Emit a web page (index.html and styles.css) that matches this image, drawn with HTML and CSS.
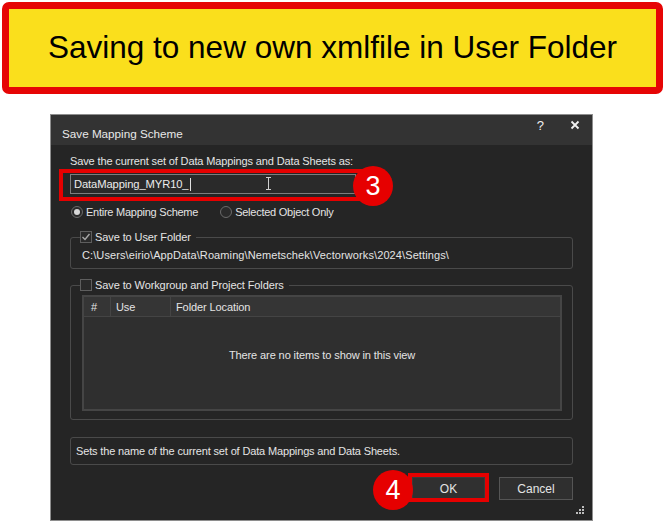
FILE: index.html
```html
<!DOCTYPE html>
<html>
<head>
<meta charset="utf-8">
<link rel="stylesheet" href="styles.css">
</head>
<body>
<div class="banner">Saving to new own xmlfile in User Folder</div>

<div class="dialog">
  <div class="titlebar">
    <span class="title">Save Mapping Scheme</span>
    <span class="tb-help">?</span>
    <svg class="tb-close" width="10" height="10" viewBox="0 0 10 10"><path d="M1.5 1.5 L8.5 8.5 M8.5 1.5 L1.5 8.5" stroke="#f0f0f0" stroke-width="1.8" fill="none"/></svg>
  </div>
  <div class="content">
    <div class="label">Save the current set of Data Mappings and Data Sheets as:</div>
    <div class="input-wrap">
      <div class="input"><span>DataMapping_MYR10_</span><span class="caret"></span>
        <svg class="ibeam" width="7" height="13" viewBox="0 0 7 13"><path d="M1 0.5 H6 M3.5 0.5 V12.5 M1 12.5 H6" stroke="#cfcfcf" stroke-width="1" fill="none"/></svg>
      </div>
      <div class="hl hl-input"></div>
      <div class="badge badge-3">3</div>
    </div>
    <div class="radios">
      <label class="radio"><span class="rb on"></span>Entire Mapping Scheme</label>
      <label class="radio"><span class="rb"></span>Selected Object Only</label>
    </div>

    <fieldset class="group g1">
      <legend><span class="cb on"><svg width="10" height="10" viewBox="0 0 10 10"><path d="M1.5 5 L4 7.5 L8.5 2" stroke="#a8a8a8" stroke-width="1.4" fill="none"/></svg></span>Save to User Folder</legend>
      <div class="path">C:\Users\eirio\AppData\Roaming\Nemetschek\Vectorworks\2024\Settings\</div>
    </fieldset>

    <fieldset class="group g2">
      <legend><span class="cb"></span>Save to Workgroup and Project Folders</legend>
      <div class="list">
        <div class="list-head">
          <div class="col c1">#</div>
          <div class="col c2">Use</div>
          <div class="col c3">Folder Location</div>
        </div>
        <div class="list-body">There are no items to show in this view</div>
      </div>
    </fieldset>

    <div class="desc">Sets the name of the current set of Data Mappings and Data Sheets.</div>

    <div class="buttons">
      <div class="btn-wrap">
        <div class="btn">OK</div>
        <div class="hl hl-ok"></div>
        <div class="badge badge-4">4</div>
      </div>
      <div class="btn">Cancel</div>
    </div>
  </div>
  <svg class="grip" width="9" height="9" viewBox="0 0 9 9">
    <rect x="7" y="1" width="2" height="2" fill="#bdbdbd"/>
    <rect x="4" y="4" width="2" height="2" fill="#bdbdbd"/>
    <rect x="7" y="4" width="2" height="2" fill="#bdbdbd"/>
    <rect x="1" y="7" width="2" height="2" fill="#bdbdbd"/>
    <rect x="4" y="7" width="2" height="2" fill="#bdbdbd"/>
    <rect x="7" y="7" width="2" height="2" fill="#bdbdbd"/>
  </svg>
</div>
</body>
</html>
```

FILE: styles.css
```css
* { box-sizing: border-box; }
html, body { margin: 0; padding: 0; background: #ffffff; }
body {
  width: 665px;
  height: 522px;
  overflow: hidden;
  font-family: "Liberation Sans", Arial, sans-serif;
}

.banner {
  margin: 2px 2px 0 2px;
  height: 92px;
  border: 7px solid #e60505;
  border-radius: 7px;
  background: #fadf1c;
  color: #000;
  font-size: 31.5px;
  display: flex;
  align-items: center;
  justify-content: center;
  padding-bottom: 2px;
}

.dialog {
  position: relative;
  margin: 20px 0 0 50px;
  width: 543px;
  height: 407px;
  border: 1px solid #8e8e8e;
  background: #252525;
  color: #e4e4e4;
  font-size: 11px;
  letter-spacing: -0.1px;
}

.titlebar {
  height: 30px;
  background: #333333;
  display: flex;
  align-items: center;
  padding: 0 0 0 11px;
}
.title {
  font-size: 11.7px;
  letter-spacing: 0;
  color: #e8e8e8;
  flex: 1;
  padding-top: 6px;
}
.tb-help {
  font-size: 13px;
  color: #f0f0f0;
  margin-right: 26px;
  margin-top: -10px;
}
.tb-close { margin-right: 12px; margin-top: -10px; }

.content {
  padding: 9px 19px 0 19px;
  display: flex;
  flex-direction: column;
}

.label { line-height: 14px; height: 14px; letter-spacing: -0.13px; }

.input-wrap {
  position: relative;
  margin-top: 6px;
  width: 286px;
}
.input {
  height: 20px;
  border: 1px solid #7d7d7d;
  background: #2a2a2a;
  display: flex;
  align-items: center;
  padding-left: 3px;
  color: #ececec;
  font-size: 11.2px;
  position: relative;
}
.caret {
  width: 1px;
  height: 13px;
  background: #e0e0e0;
  margin-left: 1px;
}
.ibeam { position: absolute; left: 194px; top: 2px; }

.hl {
  position: absolute;
  border: 4px solid #e60000;
}
.hl-input { left: -11px; top: -5px; width: 316px; height: 32px; }

.badge {
  position: absolute;
  width: 40px;
  height: 40px;
  border-radius: 50%;
  background: #e60000;
  color: #fff;
  font-size: 27px;
  letter-spacing: 0;
  display: flex;
  align-items: center;
  justify-content: center;
}
.badge-3 { left: 283px; top: -8px; }

.radios {
  display: flex;
  margin-top: 11px;
  height: 14px;
  align-items: center;
  padding-left: 1px;
}
.radio {
  display: flex;
  align-items: center;
  margin-right: 22px;
  letter-spacing: -0.25px;
}
.rb {
  width: 12px;
  height: 12px;
  border-radius: 50%;
  border: 1px solid #6a6a6a;
  margin-right: 3px;
  display: flex;
  align-items: center;
  justify-content: center;
  background: #2a2a2a;
}
.rb.on::after {
  content: "";
  width: 6px;
  height: 6px;
  border-radius: 50%;
  background: #d8d8d8;
}

.group {
  margin: 0;
  border: 1px solid #4a4a4a;
  border-radius: 3px;
  padding: 0 10px 0 9px;
}
.group legend {
  display: flex;
  align-items: center;
  height: 14px;
  padding: 0 5px 0 0;
  margin-left: 0;
}
.cb {
  width: 12px;
  height: 12px;
  border: 1px solid #5e5e5e;
  background: #2a2a2a;
  margin-right: 3px;
  display: flex;
  align-items: center;
  justify-content: center;
}
.g1 { margin-top: 11px; height: 39px; }
.path { padding: 4px 0 0 2px; line-height: 14px; letter-spacing: 0.1px; }

.g2 { margin-top: 9px; height: 142px; padding-bottom: 7px; }
.list {
  margin: 3px 0 0 2px;
  border: 2px solid #454545;
  height: 116px;
  display: flex;
  flex-direction: column;
  background: #2f2f2f;
}
.list-head {
  display: flex;
  height: 20px;
  background: #353535;
  border-bottom: 1px solid #444;
}
.col {
  display: flex;
  align-items: center;
  padding-left: 7px;
  border-right: 1px solid #454545;
}
.c1 { width: 27px; }
.c2 { width: 60px; padding-left: 5px; }
.c3 { flex: 1; border-right: none; padding-left: 5px; }
.list-body {
  flex: 1;
  display: flex;
  align-items: center;
  justify-content: center;
  padding-bottom: 17px;
}

.desc {
  margin-top: 17px;
  height: 28px;
  border: 1px solid #4a4a4a;
  border-radius: 3px;
  display: flex;
  align-items: center;
  padding-left: 5px;
  letter-spacing: -0.15px;
}

.buttons {
  display: flex;
  justify-content: flex-end;
  margin-top: 12px;
  gap: 14px;
}
.btn-wrap { position: relative; }
.btn {
  width: 74px;
  height: 23px;
  border: 1px solid #555;
  background: #2f2f2f;
  display: flex;
  align-items: center;
  justify-content: center;
  font-size: 12px;
  letter-spacing: 0;
}
.btn-wrap .btn { width: 73px; border-color: #3a3a3a; background: #303030; }
.hl-ok { left: -4px; top: -4px; width: 81px; height: 29px; }
.badge-4 { left: -39px; top: -7px; }

.grip { position: absolute; right: 8px; bottom: 6px; }
```
